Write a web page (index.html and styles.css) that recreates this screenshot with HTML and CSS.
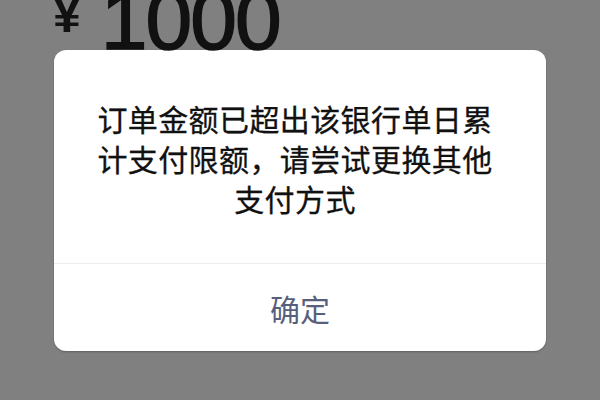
FILE: index.html
```html
<!DOCTYPE html>
<html lang="zh-CN">
<head>
<meta charset="utf-8">
<title>支付提示</title>
<link rel="stylesheet" href="styles.css">
</head>
<body>
<div class="screen">
  <div class="amount">
    <span class="yen">¥</span><span class="num">1000</span>
  </div>
  <div class="dialog">
    <div class="message">订单金额已超出该银行单日累<br>计支付限额，请尝试更换其他<br>支付方式</div>
    <div class="footer">
      <span class="confirm">确定</span>
    </div>
  </div>
</div>
</body>
</html>
```
FILE: styles.css
```css
html, body {
  margin: 0;
  padding: 0;
  background: #808080;
}
.screen {
  width: 600px;
  height: 400px;
  overflow: hidden;
  background: #808080;
}
.amount {
  height: 50px;
  display: flex;
  align-items: flex-end;
  padding-left: 53px;
  color: #111;
  font-family: "Liberation Sans", Arial, sans-serif;
}
.yen {
  font-size: 50px;
  font-weight: bold;
  line-height: 0.7;
  margin-bottom: 17px;
}
.num {
  font-size: 84px;
  line-height: 0.7;
  letter-spacing: -2px;
  margin-left: 20px;
  -webkit-text-stroke: 1.5px #111;
}
.dialog {
  margin: 0 54px;
  background: #fff;
  border-radius: 12px;
  box-shadow: 0 1px 2px rgba(0, 0, 0, 0.25);
  font-family: "Noto Sans CJK SC", "Noto Sans", sans-serif;
}
.message {
  padding: 48px 40px 45px 30px;
  text-align: center;
  font-size: 30px;
  line-height: 40px;
  letter-spacing: 0.4px;
  color: #111;
  -webkit-text-stroke: 0.3px #111;
}
.footer {
  height: 87px;
  border-top: 1px solid #ececec;
  display: flex;
  align-items: center;
  justify-content: center;
}
.confirm {
  font-size: 30px;
  line-height: 40px;
  color: #575f7c;
}
```
